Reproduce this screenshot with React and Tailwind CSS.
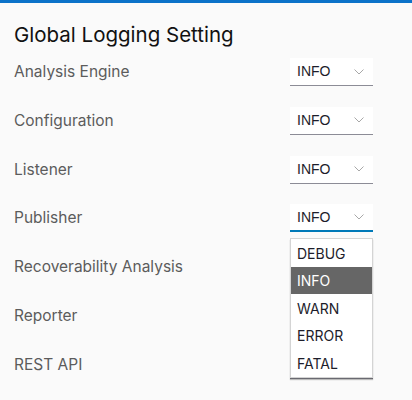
import React from 'react';

const components = [
  'Analysis Engine',
  'Configuration',
  'Listener',
  'Publisher',
  'Recoverability Analysis',
  'Reporter',
  'REST API',
];

const levels = ['DEBUG', 'INFO', 'WARN', 'ERROR', 'FATAL'];

const Chevron = () => (
  <svg width="10" height="6" viewBox="0 0 10 6" fill="none" className="shrink-0">
    <path d="M0.5 0.5 L5 5 L9.5 0.5" stroke="#a8a8a8" strokeWidth="1" />
  </svg>
);

const LevelSelect = ({ value, active }) => (
  <div
    className={`w-[83px] h-[28px] bg-white flex items-center justify-between pl-[7px] pr-[9px] ${
      active ? 'border-b-2 border-[#0079b8]' : 'border-b border-[#8c8c96]'
    }`}
  >
    <span className="text-[14px] text-[#1d1d2b] font-['Liberation_Sans',Arial,sans-serif]">{value}</span>
    <Chevron />
  </div>
);

const LevelMenu = ({ selected }) => (
  <div className="absolute left-0 top-[34px] w-[83px] bg-white border border-[#d4d4d4] shadow-[0_2px_1px_rgba(0,0,0,0.25)] z-10">
    {levels.map((lvl) => (
      <div
        key={lvl}
        className={`h-[27.5px] flex items-center pl-[6px] text-[14px] ${
          lvl === selected ? 'bg-[#666666] text-white' : 'text-[#1d1d2b]'
        }`}
      >
        {lvl}
      </div>
    ))}
  </div>
);

export default function App() {
  return (
    <div className="w-[412px] h-[400px] bg-[#fafafa] border-t-[3px] border-[#0b72c9] overflow-hidden font-['Inter','Open_Sans',sans-serif]">
      <div className="px-[14px] pt-[17px]">
        <h1 className="text-[20.5px] leading-[30px] text-[#111] font-normal">Global Logging Setting</h1>
        <div className="mt-[8px]">
          {components.map((name, i) => (
            <div key={name} className="h-[48.75px] flex items-start">
              <span className="w-[276px] mt-[4px] leading-[20px] text-[15.5px] text-[#5c5c5c]">{name}</span>
              <div className="relative">
                <LevelSelect value="INFO" active={i === 3} />
                {i === 3 && <LevelMenu selected="INFO" />}
              </div>
            </div>
          ))}
        </div>
      </div>
    </div>
  );
}
